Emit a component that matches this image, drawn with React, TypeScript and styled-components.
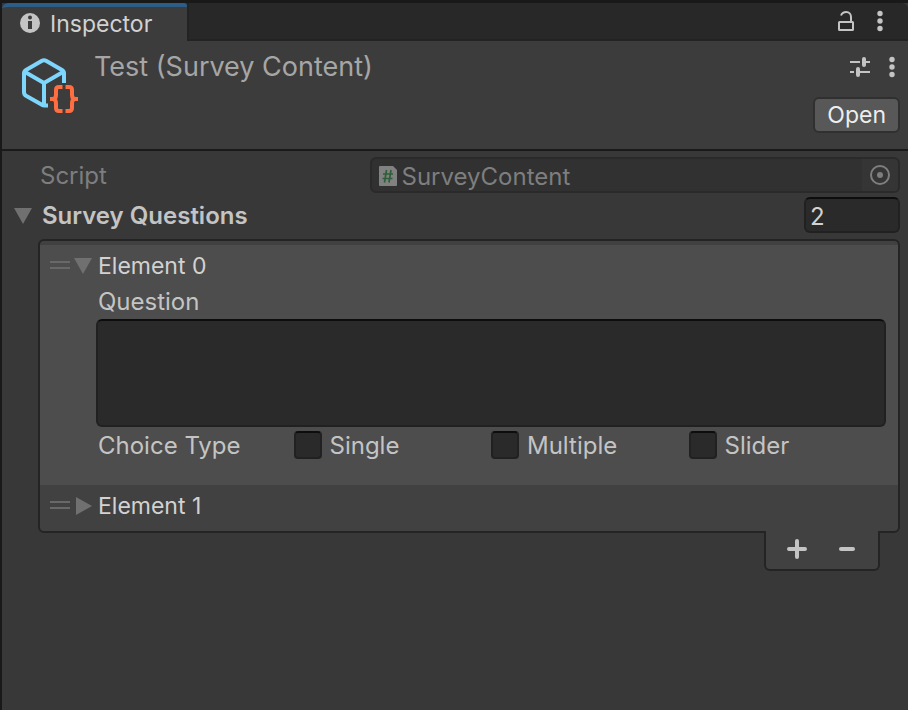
import React, { useState } from "react";
import styled, { createGlobalStyle, css } from "styled-components";

const GlobalStyle = createGlobalStyle`
  *, *::before, *::after { box-sizing: border-box; }
  html, body { margin: 0; background: #383838; }
  body, button, input, textarea {
    font-family: Inter, "Liberation Sans", sans-serif;
    font-size: 24px;
    line-height: 34px;
    color: #c4c4c4;
  }
  svg { display: block; flex: none; }
`;

const Window = styled.main`
  min-height: 100vh;
  border-top: 3px solid #191919;
  border-left: 2px solid #191919;
  background: #383838;
`;

const TabBar = styled.div`
  display: flex;
  align-items: stretch;
  background: #282828;
  border-top-left-radius: 6px;
  border-top-right-radius: 6px;
`;

const Tab = styled.button`
  display: flex;
  align-items: center;
  gap: 9px;
  height: 38px;
  padding: 0 35px 0 17px;
  border: 0;
  border-top: 4px solid #2c5d87;
  border-radius: 6px 3px 0 0;
  background: #3c3c3c;
  color: #d2d2d2;
  font-size: 23px;
`;

const TabTools = styled.div`
  flex: 1;
  display: flex;
  justify-content: flex-end;
  align-items: center;
  gap: 22px;
  padding-right: 25px;
  border-left: 2px solid #232323;
  border-bottom: 2px solid #232323;
`;

const IconButton = styled.button`
  display: flex;
  padding: 0;
  border: 0;
  background: none;
  color: #c4c4c4;
`;

const Header = styled.header`
  display: flex;
  align-items: flex-start;
  min-height: 110px;
  padding: 8px 8px 16px 18px;
  border-bottom: 2px solid #1a1a1a;
  background: #3c3c3c;
`;

const AssetBadge = styled.span`
  padding-top: 6px;
`;

const Title = styled.h1`
  flex: 1;
  margin: 0 0 0 14px;
  font-size: 27px;
  font-weight: 400;
  line-height: 36px;
  color: #a6a6a6;
`;

const HeaderSide = styled.div`
  display: flex;
  flex-direction: column;
  align-items: flex-end;
  gap: 12px;
`;

const HeaderTools = styled.div`
  display: flex;
  align-items: center;
  gap: 19px;
  height: 36px;
  padding-right: 5px;
`;

const OpenButton = styled.button`
  height: 36px;
  padding: 0 12px;
  border: 2px solid #303030;
  border-radius: 6px;
  background: #585858;
  color: #eeeeee;
  font-size: 23px;
  line-height: 32px;
`;

const Body = styled.section`
  display: flex;
  flex-direction: column;
  padding: 6px 8px 0 36px;
`;

const ScriptRow = styled.div`
  display: grid;
  grid-template-columns: minmax(0, 5fr) minmax(0, 8fr);
  color: #7e7e7e;
`;

const FieldLabel = styled.label`
  padding: 2px 0 0 2px;
`;

const ObjectField = styled.div`
  display: flex;
  align-items: stretch;
  height: 36px;
  border: 2px solid #2a2a2a;
  border-radius: 6px;
  background: #313131;
  overflow: hidden;
`;

const FieldIcon = styled.span`
  display: flex;
  align-items: center;
  padding: 2px 5px 0 7px;
`;

const ObjectInput = styled.input`
  flex: 1;
  min-width: 0;
  padding: 4px 0 0;
  border: 0;
  background: none;
  color: #7e7e7e;
  line-height: 28px;
`;

const PickerButton = styled.button`
  display: flex;
  align-items: center;
  padding: 0 8px;
  border: 0;
  background: #353535;
  color: #7e7e7e;
`;

const ListHeader = styled.div`
  display: flex;
  align-items: center;
  justify-content: space-between;
  margin: 4px 0 6px -24px;
`;

const Foldout = styled.button<{ $bold?: boolean; $gap: number }>`
  display: flex;
  align-items: center;
  gap: ${(p) => p.$gap}px;
  padding: 2px 0 0;
  border: 0;
  background: none;
  color: ${(p) => (p.$bold ? "#c4c4c4" : "#d2d2d2")};
  font-size: ${(p) => (p.$bold ? 24 : 23)}px;
  font-weight: ${(p) => (p.$bold ? 600 : 400)};
`;

const ArrowBox = styled.span`
  display: flex;
  width: 18px;
`;

const sunken = css`
  border: 2px solid #212121;
  border-top-color: #0d0d0d;
  background: #2a2a2a;
  outline: none;
`;

const SizeInput = styled.input`
  ${sunken}
  width: 96px;
  height: 36px;
  padding: 2px 4px 0;
  border-radius: 6px;
  color: #d2d2d2;
  line-height: 30px;
`;

const List = styled.div`
  padding-top: 4px;
  border: 2px solid #242424;
  border-radius: 6px;
  background: #414141;
`;

const Item = styled.div<{ $selected?: boolean }>`
  padding: 2px 12px ${(p) => (p.$selected ? 22 : 8)}px 10px;
  background: ${(p) => (p.$selected ? "#4d4d4d" : "transparent")};
`;

const ItemHead = styled.div`
  display: flex;
  align-items: center;
  gap: 4px;
`;

const Handle = styled.span`
  width: 20px;
  height: 8px;
  border: 2px solid #686868;
  border-width: 2px 0;
`;

const ItemBody = styled.div`
  display: flex;
  flex-direction: column;
  padding-left: 46px;
`;

const QuestionBox = styled.textarea`
  ${sunken}
  display: block;
  width: 100%;
  height: 108px;
  padding: 2px 6px;
  border-radius: 6px;
  resize: none;
`;

const ChoiceRow = styled.div`
  display: grid;
  grid-template-columns: minmax(0, 1fr) minmax(0, 3fr);
`;

const Choices = styled.div`
  display: grid;
  grid-template-columns: repeat(3, minmax(0, 1fr));
`;

const Choice = styled.label`
  display: flex;
  align-items: center;
  gap: 8px;
`;

const ChoiceName = styled.span`
  padding-top: 2px;
`;

const CheckBox = styled.input`
  ${sunken}
  appearance: none;
  width: 28px;
  height: 28px;
  margin: 0;
  border-radius: 4px;
  &:checked { background: #8a8a8a; }
`;

const ListFooter = styled.div`
  display: flex;
  justify-content: center;
  align-items: center;
  align-self: flex-end;
  gap: 30px;
  height: 40px;
  margin: -2px 20px 0 0;
  padding: 0 21px 2px;
  border: 2px solid #242424;
  border-top: 0;
  border-radius: 0 0 6px 6px;
  background: #414141;
`;

const InfoIcon = () => (
  <svg width="22" height="22" viewBox="0 0 22 22" aria-hidden="true">
    <circle cx="11" cy="10" r="10" fill="#c4c4c4" />
    <circle cx="11" cy="4.5" r="2" fill="#3c3c3c" />
    <path d="M9 8h4v8H9z" fill="#3c3c3c" />
  </svg>
);

const LockIcon = () => (
  <svg width="18" height="22" viewBox="0 0 18 22" fill="none" stroke="currentColor" strokeWidth="2" aria-hidden="true">
    <rect x="2" y="12" width="14" height="8" rx="0.5" />
    <path d="M4 5.500C5 3 7 2 9.300 2C12 2 14 4 14 7v5" />
  </svg>
);

const DotsIcon = () => (
  <svg width="6" height="22" viewBox="0 0 6 22" fill="currentColor" aria-hidden="true">
    <circle cx="3" cy="3.5" r="2.7" />
    <circle cx="3" cy="11" r="2.7" />
    <circle cx="3" cy="18.5" r="2.7" />
  </svg>
);

const PresetIcon = () => (
  <svg width="20" height="20" viewBox="0 0 20 20" fill="none" stroke="currentColor" aria-hidden="true">
    <path d="M0 5h10M16 5h4M0 15h4M10 15h10" strokeWidth="2" />
    <path d="M14 2v6M8 12v6" strokeWidth="4" strokeLinecap="round" />
  </svg>
);

const AssetIcon = () => (
  <svg width="60" height="60" viewBox="0 0 60 60" fill="none" strokeWidth="4" aria-hidden="true">
    <g stroke="#7fd6fd" strokeLinejoin="round">
      <path d="M44 28V18.500q0-2.300-2-3.500L26 5.800q-2-1.200-4 0L6 15q-2 1.200-2 3.500V37q0 2.500 2 3.700L21.500 49.500q1.500 1 3 1H28" />
      <path d="M5 17L24 28L43 17M24 28v22" />
    </g>
    <g stroke="#ff6e40">
      <path d="M42.500 32H39q-3 0-3 3v5q0 4-3.500 4H30h2.500q3.500 0 3.500 4v5q0 3 3 3h3.500" />
      <path d="M45.500 32H49q3 0 3 3v5q0 4 3.500 4H58h-2.500q-3.500 0-3.500 4v5q0 3-3 3h-3.500" />
    </g>
  </svg>
);

const ScriptIcon = () => (
  <svg width="18" height="20" viewBox="0 0 18 20" aria-hidden="true">
    <path d="M1 0h13l4 4v15a1 1 0 0 1-1 1H1a1 1 0 0 1-1-1V1a1 1 0 0 1 1-1z" fill="#818181" />
    <path d="M7.500 4L5.500 16.500M12 4L10 16.500M4 8h10M3.500 12.500h10" stroke="#2f5f38" strokeWidth="1.700" />
  </svg>
);

const TargetIcon = () => (
  <svg width="20" height="20" viewBox="0 0 20 20" aria-hidden="true">
    <circle cx="10" cy="10" r="9" fill="none" stroke="currentColor" strokeWidth="2" />
    <circle cx="10" cy="10" r="3" fill="currentColor" />
  </svg>
);

const Arrow = ({ open }: { open: boolean }) => (
  <ArrowBox>
    {open ? (
      <svg width="18" height="16" viewBox="0 0 18 16" aria-hidden="true">
        <path d="M0 0h18L9 16z" fill="#707070" />
      </svg>
    ) : (
      <svg width="18" height="18" viewBox="0 0 18 18" aria-hidden="true">
        <path d="M2 0v18l16-9z" fill="#707070" />
      </svg>
    )}
  </ArrowBox>
);

const PlusIcon = () => (
  <svg width="20" height="20" viewBox="0 0 20 20" aria-hidden="true">
    <path d="M2 10h16M10 2v16" stroke="currentColor" strokeWidth="4" strokeLinecap="round" />
  </svg>
);

const MinusIcon = () => (
  <svg width="20" height="20" viewBox="0 0 20 20" aria-hidden="true">
    <path d="M4 10h12" stroke="currentColor" strokeWidth="4" strokeLinecap="round" />
  </svg>
);

const choiceTypes = ["Single", "Multiple", "Slider"];

export default function App() {
  const [size, setSize] = useState("2");
  return (
    <>
      <GlobalStyle />
      <Window>
        <TabBar>
          <Tab type="button">
            <InfoIcon />
            Inspector
          </Tab>
          <TabTools>
            <IconButton type="button" aria-label="Lock"><LockIcon /></IconButton>
            <IconButton type="button" aria-label="Window menu"><DotsIcon /></IconButton>
          </TabTools>
        </TabBar>
        <Header>
          <AssetBadge><AssetIcon /></AssetBadge>
          <Title>Test (Survey Content)</Title>
          <HeaderSide>
            <HeaderTools>
              <IconButton type="button" aria-label="Presets"><PresetIcon /></IconButton>
              <IconButton type="button" aria-label="Component menu"><DotsIcon /></IconButton>
            </HeaderTools>
            <OpenButton type="button">Open</OpenButton>
          </HeaderSide>
        </Header>
        <Body>
          <ScriptRow>
            <FieldLabel htmlFor="script">Script</FieldLabel>
            <ObjectField>
              <FieldIcon><ScriptIcon /></FieldIcon>
              <ObjectInput id="script" value="SurveyContent" disabled readOnly />
              <PickerButton type="button" aria-label="Select script" disabled><TargetIcon /></PickerButton>
            </ObjectField>
          </ScriptRow>
          <ListHeader>
            <Foldout type="button" aria-expanded="true" $bold $gap={10}>
              <Arrow open />
              Survey Questions
            </Foldout>
            <SizeInput aria-label="Survey Questions size" value={size} onChange={(e) => setSize(e.target.value)} />
          </ListHeader>
          <List>
            <Item $selected>
              <ItemHead>
                <Handle />
                <Foldout type="button" aria-expanded="true" $gap={6}>
                  <Arrow open />
                  Element 0
                </Foldout>
              </ItemHead>
              <ItemBody>
                <FieldLabel htmlFor="question">Question</FieldLabel>
                <QuestionBox id="question" />
                <ChoiceRow role="group" aria-labelledby="choice-type">
                  <FieldLabel as="span" id="choice-type">Choice Type</FieldLabel>
                  <Choices>
                    {choiceTypes.map((name) => (
                      <Choice key={name}>
                        <CheckBox type="checkbox" />
                        <ChoiceName>{name}</ChoiceName>
                      </Choice>
                    ))}
                  </Choices>
                </ChoiceRow>
              </ItemBody>
            </Item>
            <Item>
              <ItemHead>
                <Handle />
                <Foldout type="button" aria-expanded="false" $gap={6}>
                  <Arrow open={false} />
                  Element 1
                </Foldout>
              </ItemHead>
            </Item>
          </List>
          <ListFooter>
            <IconButton type="button" aria-label="Add element"><PlusIcon /></IconButton>
            <IconButton type="button" aria-label="Remove element"><MinusIcon /></IconButton>
          </ListFooter>
        </Body>
      </Window>
    </>
  );
}
